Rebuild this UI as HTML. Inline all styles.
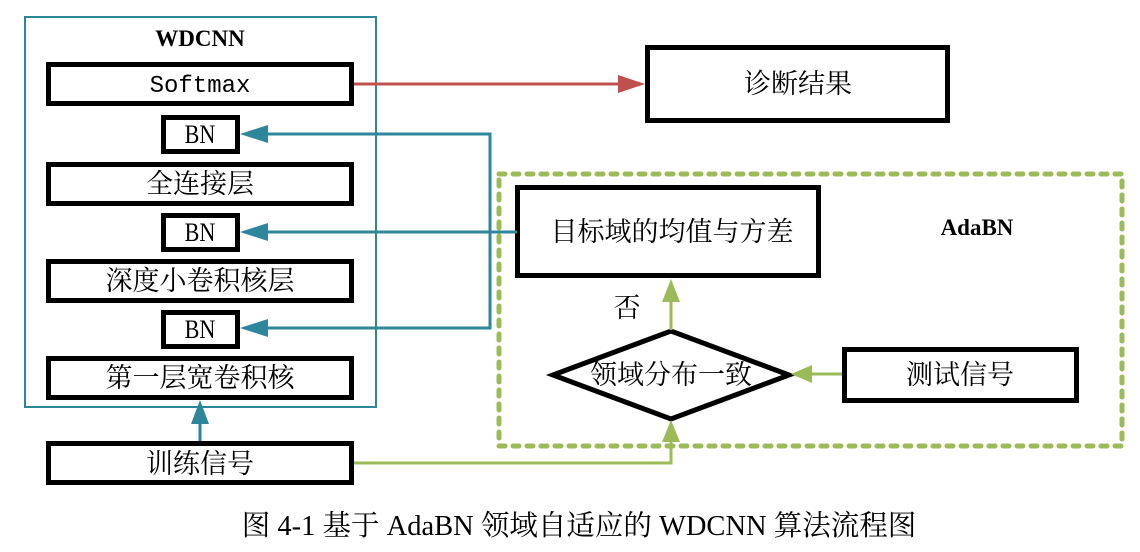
<!DOCTYPE html>
<html><head><meta charset="utf-8"><style>
body{margin:0;background:#fff;}
svg{display:block}
text{font-family:"Liberation Serif","Noto Serif CJK SC",serif;fill:#000}
</style></head><body>
<svg width="1140" height="552" viewBox="0 0 1140 552" xmlns="http://www.w3.org/2000/svg">
<rect x="25" y="17" width="351" height="390" fill="none" stroke="#2e869a" stroke-width="2"/>
<text x="200" y="46" font-size="23" font-weight="bold" text-anchor="middle">WDCNN</text>
<g fill="none" stroke="#000" stroke-width="5">
<rect x="48.5" y="64.5" width="303" height="39"/>
<rect x="163.5" y="117.5" width="74" height="34"/>
<rect x="48.5" y="164.5" width="303" height="39"/>
<rect x="163.5" y="215.5" width="74" height="34"/>
<rect x="48.5" y="261.5" width="303" height="39"/>
<rect x="163.5" y="312.5" width="74" height="34"/>
<rect x="48.5" y="358.5" width="303" height="39"/>
<rect x="48.5" y="443.5" width="303" height="39"/>
<rect x="647.5" y="47.5" width="300" height="73"/>
<rect x="517.5" y="187.5" width="301" height="88"/>
<rect x="844.5" y="349.5" width="232" height="51"/>
<path d="M553,375 L671,331 L789,375 L671,419 Z" stroke-linejoin="miter"/>
</g>
<text x="200" y="92" font-size="24" text-anchor="middle" style="font-family:'Liberation Mono',monospace">Softmax</text>
<g font-size="26" text-anchor="middle">
<text x="200" y="143" transform="translate(200 0) scale(0.85 1) translate(-200 0)">BN</text>
<text x="200" y="241" transform="translate(200 0) scale(0.85 1) translate(-200 0)">BN</text>
<text x="200" y="338" transform="translate(200 0) scale(0.85 1) translate(-200 0)">BN</text>
</g>
<g font-size="27" text-anchor="middle">
<text x="200" y="193">全连接层</text>
<text x="200" y="290">深度小卷积核层</text>
<text x="200" y="387">第一层宽卷积核</text>
<text x="200" y="473">训练信号</text>
<text x="798" y="93">诊断结果</text>
<text x="672" y="241">目标域的均值与方差</text>
<text x="960" y="384">测试信号</text>
<text x="671" y="384">领域分布一致</text>
<text x="627" y="317">否</text>
</g>
<text x="977" y="235" font-size="23" font-weight="bold" text-anchor="middle">AdaBN</text>
<rect x="499" y="174" width="623" height="272" fill="none" stroke="#9bbb59" stroke-width="5" stroke-dasharray="6,8" stroke-linecap="round"/>
<g stroke="#2e869a" stroke-width="3" fill="none">
<path d="M260,134 H490 V328 H260"/>
<path d="M260,232 H517"/>
<path d="M200,441 V418"/>
</g>
<g fill="#2e869a">
<path d="M240,134 L268,125 L268,143Z"/>
<path d="M240,232 L268,223 L268,241Z"/>
<path d="M240,328 L268,319 L268,337Z"/>
<path d="M200,400 L191,424 L209,424Z"/>
</g>
<path d="M354,84 H625" stroke="#c0504d" stroke-width="3"/>
<path d="M645,84 L618,75 L618,93Z" fill="#c0504d"/>
<g stroke="#9bbb59" stroke-width="3" fill="none">
<path d="M354,463 H671 V440"/>
<path d="M671,330 V300"/>
<path d="M842,374 H810"/>
</g>
<g fill="#9bbb59">
<path d="M671,420 L662,442 L680,442Z"/>
<path d="M671,279 L662,302 L680,302Z"/>
<path d="M791,374 L812,365 L812,383Z"/>
</g>
<text x="579" y="535" font-size="28.5" text-anchor="middle">图 4-1 基于 AdaBN 领域自适应的 WDCNN 算法流程图</text>
</svg>
</body></html>
